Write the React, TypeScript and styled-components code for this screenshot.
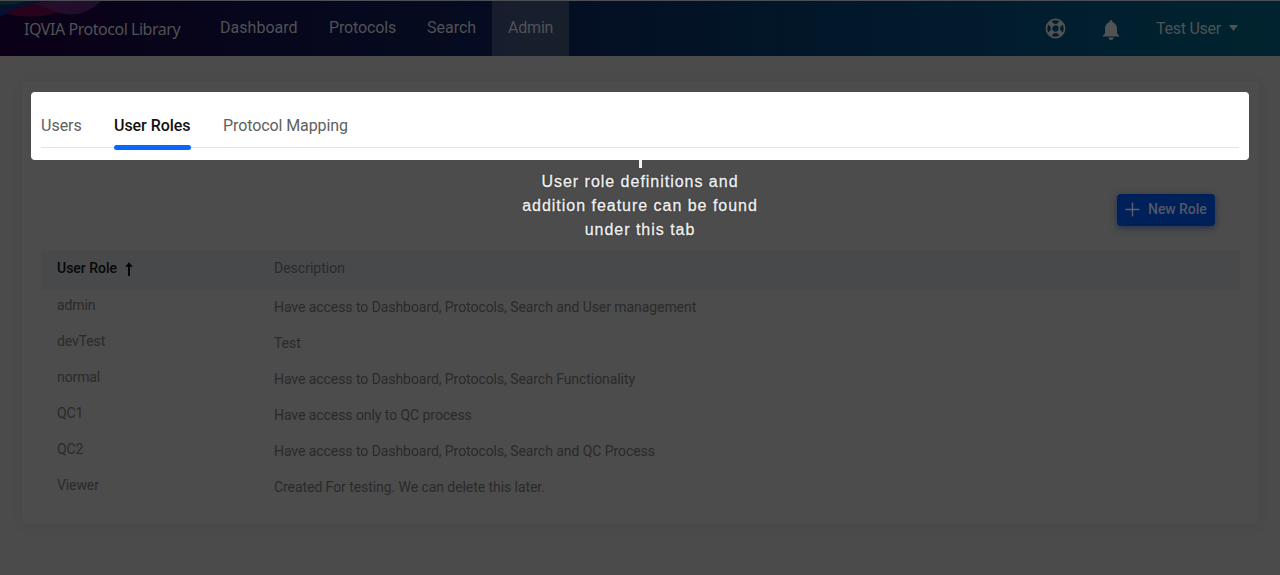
import React from "react";
import styled, { createGlobalStyle } from "styled-components";

const GlobalStyle = createGlobalStyle`
  * { box-sizing: border-box; }
  html, body { margin: 0; background: #4b4b4b; }
  body { font-family: Roboto, "Liberation Sans", sans-serif; overflow: hidden; }
`;

const Page = styled.div`
  width: 1280px;
  height: 575px;
  background: #4b4b4b;
`;

const TopBar = styled.header`
  position: relative;
  display: flex;
  height: 56px;
  color: #515254;
  border-top: 1px solid #4c4f56;
  background: linear-gradient(90deg, #0b0017 0%, #07051b 16%, #050b20 36%, #031326 55%, #011c2e 78%, #00242f 100%);
`;

const Waves = styled.svg`
  position: absolute;
  left: 0;
  top: 0;
`;

const Brand = styled.div`
  width: 180px;
  padding-left: 24px;
  font: 16px/57px "Noto Sans", sans-serif;
  letter-spacing: -0.46px;
  white-space: nowrap;
  z-index: 1;
`;

const Nav = styled.nav`
  display: flex;
  margin-left: 24px;
`;

const NavItem = styled.a<{ $w: number; $active?: boolean; $ls?: number }>`
  width: ${(p) => p.$w}px;
  padding-left: 16px;
  font-size: 16px;
  line-height: 54.6px;
  letter-spacing: ${(p) => p.$ls ?? 0}px;
  white-space: nowrap;
  background: ${(p) => (p.$active ? "rgba(76, 76, 76, 0.28)" : "none")};
`;

const Tools = styled.div`
  display: flex;
  align-items: center;
  margin-left: auto;
  padding-right: 42px;
  font-size: 16px;
  height: 54px;
`;

const HelpIcon = styled.svg`
  margin-right: 37px;
`;

const BellIcon = styled.svg`
  margin: 3px 37px 0 0;
`;

const UserName = styled.span`
  width: 65px;
  letter-spacing: -0.25px;
  white-space: nowrap;
`;

const Caret = styled.svg`
  margin-left: 8px;
`;

const Main = styled.main`
  padding: 24px 20px 0 21px;
`;

const Card = styled.section`
  height: 445px;
  padding: 11px 9px;
  border: 1px solid #484848;
  border-radius: 4px;
  background: #4c4c4c;
  box-shadow: 0 2px 14px rgba(0, 0, 0, 0.04);
`;

const Spotlight = styled.div`
  width: 1218px;
  height: 68px;
  padding: 10px 10px 0;
  border-radius: 4px;
  background: #fff;
`;

const Tabs = styled.div`
  display: flex;
  gap: 32px;
  height: 46px;
  border-bottom: 1px solid #e4e4e4;
`;

const Tab = styled.div<{ $w: number; $active?: boolean; $ls?: number }>`
  display: flex;
  flex-direction: column;
  justify-content: space-between;
  width: ${(p) => p.$w}px;
  height: 48px;
  font-size: 16px;
  line-height: 48px;
  font-weight: ${(p) => (p.$active ? 500 : 400)};
  letter-spacing: ${(p) => p.$ls ?? 0}px;
  color: ${(p) => (p.$active ? "#111" : "#606060")};
  white-space: nowrap;
  &::after {
    content: "";
    flex: none;
    height: 5px;
    margin-top: -5px;
    border-radius: 3px;
    background: ${(p) => (p.$active ? "#0768fd" : "transparent")};
  }
`;

const Guide = styled.div`
  display: grid;
  grid-template-columns: 1fr 260px 1fr;
  width: 1218px;
  height: 91px;
`;

const Pointer = styled.div`
  width: 3px;
  height: 8px;
  margin: 0 auto;
  background: #f4f4f4;
`;

const GuideBody = styled.div`
  grid-column: 2;
`;

const GuideText = styled.p`
  margin: 2px 0 0;
  font: 16px/24px "Liberation Sans", Arial, sans-serif;
  letter-spacing: 0.98px;
  text-align: center;
  white-space: nowrap;
  color: #f0f0f0;
  -webkit-text-stroke: 0.3px #f0f0f0;
  text-shadow: 0 0 2px #222;
`;

const NewRole = styled.button`
  display: flex;
  align-items: center;
  gap: 8px;
  justify-self: end;
  width: 98px;
  height: 32px;
  margin: 34px 34px 0 0;
  padding: 0 0 2px 8px;
  border: 0;
  border-radius: 4px;
  background: #00205a;
  color: #545861;
  font: 500 14px Roboto, sans-serif;
  letter-spacing: -0.05px;
  white-space: nowrap;
  box-shadow: 0 2px 7px rgba(0, 24, 76, 0.55);
`;

const Table = styled.div`
  margin: 0 10px;
  width: 1199px;
  font-size: 14px;
  color: #2a2a2a;
`;

const HeadRow = styled.div`
  display: grid;
  grid-template-columns: 217px 1fr;
  height: 39px;
  padding-left: 16px;
  line-height: 35px;
  background: #47494b;
`;

const SortHead = styled.div`
  display: flex;
  align-items: center;
  gap: 8px;
  height: 35px;
  font-weight: 500;
  color: #070707;
`;

const Row = styled.div`
  display: grid;
  grid-template-columns: 217px 1fr;
  height: 36px;
  margin-left: 16px;
  border-bottom: 1px solid #4a4a4a;
  &:last-child { border-bottom: 0; }
`;

const RoleCell = styled.div`
  line-height: 30px;
  letter-spacing: -0.1px;
`;

const DescCell = styled.div`
  line-height: 34px;
  letter-spacing: -0.065px;
`;

const roles = [
  { name: "admin", text: "Have access to Dashboard, Protocols, Search and User management" },
  { name: "devTest", text: "Test" },
  { name: "normal", text: "Have access to Dashboard, Protocols, Search Functionality" },
  { name: "QC1", text: "Have access only to QC process" },
  { name: "QC2", text: "Have access to Dashboard, Protocols, Search and QC Process" },
  { name: "Viewer", text: "Created For testing. We can delete this later." },
];

export default function App() {
  return (
    <Page>
      <GlobalStyle />
      <TopBar>
        <Waves width="104" height="18" viewBox="0 0 104 18">
          <path d="M0 0H55C38 4 24 10 0 15Z" fill="#06102f" />
          <path d="M0 0H27C18 3 8 4 0 4Z" fill="#052521" />
          <path d="M5 12C16 7 24 4 34 3C45 0 50 0 60 0H80C62 14 32 20 5 12Z" fill="#28041c" />
          <path d="M34 3C45 0 50 0 60 0H101C88 13 70 18 52 9C46 6 40 4 34 3Z" fill="#25102e" fillOpacity=".85" />
        </Waves>
        <Brand>IQVIA Protocol Library</Brand>
        <Nav>
          <NavItem $w={109} $ls={0.03}>Dashboard</NavItem>
          <NavItem $w={98} $ls={-0.15}>Protocols</NavItem>
          <NavItem $w={81}>Search</NavItem>
          <NavItem $w={77} $ls={-0.2} $active>Admin</NavItem>
        </Nav>
        <Tools>
          <HelpIcon width="21" height="21" viewBox="0 0 21 21" fill="none" stroke="#515254">
            <circle cx="10.5" cy="10.5" r="9.1" strokeWidth="1.7" />
            <circle cx="10.5" cy="10.5" r="4" strokeWidth="1.7" />
            <g strokeWidth="4.6">
              <path d="M4.500 4.500 7.600 7.600M16.500 4.500 13.400 7.600M4.500 16.500 7.600 13.400M16.500 16.500 13.400 13.400" />
            </g>
          </HelpIcon>
          <BellIcon width="16" height="20" viewBox="0 0 16 20" fill="#515254">
            <path d="M8 20a2.500 2.500 0 0 0 2.500-2.500H5.500A2.500 2.500 0 0 0 8 20ZM14 13.500V8.500C14 5.400 12.300 2.900 9.500 2.200V1.500a1.500 1.500 0 0 0-3 0V2.200C3.600 2.900 2 5.400 2 8.500V13.500L0 15.500V16.500H16V15.500Z" />
          </BellIcon>
          <UserName>Test User</UserName>
          <Caret width="9" height="6" viewBox="0 0 9 6"><path d="M0 0H9L4.5 6Z" fill="#515254" /></Caret>
        </Tools>
      </TopBar>
      <Main>
        <Card>
          <Spotlight>
            <Tabs>
              <Tab $w={41}>Users</Tab>
              <Tab $w={77} $ls={-0.05} $active>User Roles</Tab>
              <Tab $w={126} $ls={-0.09}>Protocol Mapping</Tab>
            </Tabs>
          </Spotlight>
          <Guide>
            <GuideBody>
              <Pointer />
              <GuideText>User role definitions and<br />addition feature can be found<br />under this tab</GuideText>
            </GuideBody>
            <NewRole>
              <svg width="15" height="15" viewBox="0 0 15 15" stroke="#5b5f67" strokeWidth="1.4"><path d="M7.500 0.500V14.500M.5 7.500H14.500" /></svg>
              New Role
            </NewRole>
          </Guide>
          <Table>
            <HeadRow>
              <SortHead>
                User Role
                <svg width="8" height="14" viewBox="0 0 8 14" fill="#070707"><path d="M4 .3 7.900 4.700H5V14H3V4.700H.1Z" /></svg>
              </SortHead>
              <div>Description</div>
            </HeadRow>
            {roles.map((r) => (
              <Row key={r.name}>
                <RoleCell>{r.name}</RoleCell>
                <DescCell>{r.text}</DescCell>
              </Row>
            ))}
          </Table>
        </Card>
      </Main>
    </Page>
  );
}
